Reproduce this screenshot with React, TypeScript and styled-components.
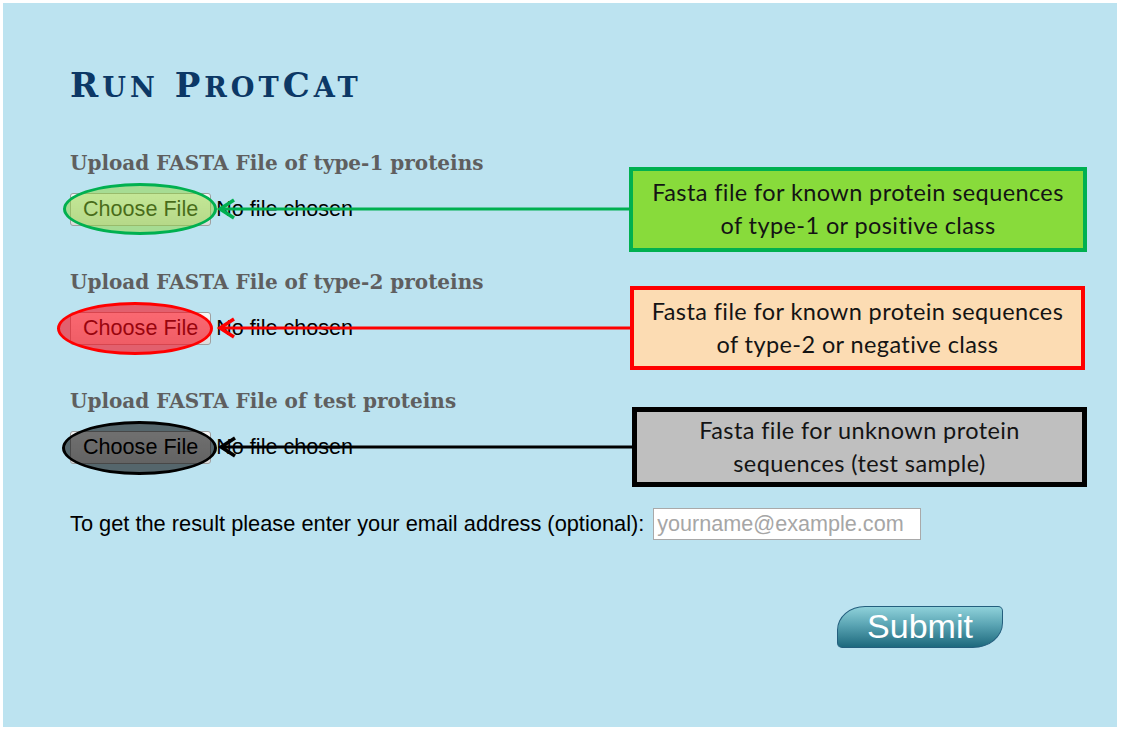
import styled, { createGlobalStyle } from "styled-components";

const GlobalStyle = createGlobalStyle`
  html, body {
    margin: 0;
    padding: 0;
    background: #ffffff;
  }
`;

const Panel = styled.main`
  box-sizing: border-box;
  margin: 3px;
  width: 1114px;
  height: 724px;
  background: #bce3f0;
  padding: 62px 30px 0 67px;
  display: flex;
  flex-direction: column;
`;

const Title = styled.h1`
  margin: 0 0 44px;
  font-family: "DejaVu Serif", serif;
  font-size: 34px;
  line-height: 40px;
  font-weight: bold;
  letter-spacing: 4px;
  color: #0c3866;
`;

const Small = styled.span`
  font-size: 0.8em;
  text-transform: uppercase;
`;

const Section = styled.section`
  display: flex;
  flex-direction: column;
  gap: 17px;
  margin-bottom: 44px;
`;

const Heading = styled.h2`
  margin: 0;
  font-family: "DejaVu Serif", serif;
  font-size: 20px;
  line-height: 24px;
  font-weight: bold;
  color: #5f5f5f;
`;

const FieldRow = styled.div`
  display: flex;
  align-items: center;
  height: 34px;
`;

const FileField = styled.label`
  position: relative;
  display: flex;
  align-items: center;
  gap: 5px;
  font-family: "Liberation Sans", Arial, sans-serif;
  font-size: 21.6px;
  color: #000;
`;

const ChooseButton = styled.span`
  box-sizing: border-box;
  height: 33px;
  padding: 0 12px;
  display: flex;
  align-items: center;
  border: 1px solid #a0a0a0;
  border-radius: 3px;
  background: linear-gradient(#f8f8f8, #dcdcdc);
`;

const Highlight = styled.span<{
  $fill: string;
  $stroke: string;
  $left: number;
  $top: number;
  $w: number;
  $h: number;
}>`
  position: absolute;
  box-sizing: border-box;
  left: ${(p) => p.$left}px;
  top: ${(p) => p.$top}px;
  width: ${(p) => p.$w}px;
  height: ${(p) => p.$h}px;
  border-radius: 50%;
  border: 3px solid ${(p) => p.$stroke};
  background: ${(p) => p.$fill};
  pointer-events: none;
`;

const Callout = styled.div<{
  $bg: string;
  $border: string;
  $bw: number;
  $width: number;
  $height: number;
  $right: number;
}>`
  position: relative;
  box-sizing: border-box;
  margin-left: auto;
  margin-right: ${(p) => p.$right}px;
  width: ${(p) => p.$width}px;
  height: ${(p) => p.$height}px;
  flex-shrink: 0;
  display: flex;
  align-items: center;
  justify-content: center;
  text-align: center;
  background: ${(p) => p.$bg};
  border: ${(p) => p.$bw}px solid ${(p) => p.$border};
  font-family: Lato, "Open Sans", sans-serif;
  font-size: 23.5px;
  letter-spacing: 0.4px;
  line-height: 33px;
  color: #141414;
`;

const Arrow = styled.svg`
  position: absolute;
  right: 100%;
  top: 50%;
  height: 22px;
  margin-top: -11px;
  overflow: visible;
`;

const EmailRow = styled.div`
  display: flex;
  align-items: center;
  gap: 9px;
  font-family: "Liberation Sans", Arial, sans-serif;
  font-size: 21.8px;
  color: #000;
`;

const EmailInput = styled.input`
  box-sizing: border-box;
  width: 268px;
  height: 32px;
  border: 1px solid #a9a9a9;
  padding: 0 3px;
  background: #fff;
  font-family: "Liberation Sans", Arial, sans-serif;
  font-size: 21.6px;
  outline: none;

  &::placeholder {
    color: #a6a6a6;
  }
`;

const SubmitRow = styled.div`
  display: flex;
  justify-content: flex-end;
  margin-top: 66px;
  padding-right: 84px;
`;

const SubmitButton = styled.button`
  box-sizing: border-box;
  width: 166px;
  height: 42px;
  padding: 0 0 2px;
  border: 1px solid #245f7e;
  border-radius: 28px 5px 30px 5px / 24px 5px 25px 5px;
  background: linear-gradient(#8fd1da, #5aa4b3 45%, #1d697d);
  color: #fff;
  font-family: "Liberation Sans", Arial, sans-serif;
  font-size: 34px;
  cursor: pointer;
`;

type Upload = {
  heading: string;
  color: string;
  fill: string;
  ring: { left: number; top: number; w: number; h: number };
  box: { bg: string; bw: number; width: number; height: number; right: number };
  lines: [string, string];
};

const uploads: Upload[] = [
  {
    heading: "Upload FASTA File of type-1 proteins",
    color: "#00b050",
    fill: "rgba(144, 213, 54, 0.5)",
    ring: { left: -7, top: -10, w: 154, h: 52 },
    box: { bg: "#88db3b", bw: 4, width: 458, height: 85, right: 0 },
    lines: ["Fasta file for known protein sequences", "of type-1 or positive class"],
  },
  {
    heading: "Upload FASTA File of type-2 proteins",
    color: "#ff0000",
    fill: "rgba(252, 8, 23, 0.6)",
    ring: { left: -13, top: -10, w: 156, h: 53 },
    box: { bg: "#fcdcb3", bw: 4, width: 455, height: 84, right: 2 },
    lines: ["Fasta file for known protein sequences", "of type-2 or negative class"],
  },
  {
    heading: "Upload FASTA File of test proteins",
    color: "#000000",
    fill: "rgba(0, 0, 0, 0.55)",
    ring: { left: -8, top: -10, w: 155, h: 54 },
    box: { bg: "#bfbfbf", bw: 5, width: 455, height: 80, right: 0 },
    lines: ["Fasta file for unknown protein", "sequences (test sample)"],
  },
];

function PointerArrow({ color, length }: { color: string; length: number }) {
  return (
    <Arrow width={length} viewBox={`0 0 ${length} 22`}>
      <line x1={4} y1={11} x2={length} y2={11} stroke={color} strokeWidth={3} />
      <polyline
        points="17,2 3,11 17,20"
        fill="none"
        stroke={color}
        strokeWidth={3.5}
        strokeLinejoin="miter"
      />
    </Arrow>
  );
}

export default function App() {
  return (
    <>
      <GlobalStyle />
      <Panel>
        <Title>
          R<Small>un</Small> P<Small>rot</Small>C<Small>at</Small>
        </Title>
        {uploads.map((u) => (
          <Section key={u.heading}>
            <Heading>{u.heading}</Heading>
            <FieldRow>
              <FileField>
                <ChooseButton>Choose File</ChooseButton>
                <span>No file chosen</span>
                <Highlight
                  $fill={u.fill}
                  $stroke={u.color}
                  $left={u.ring.left}
                  $top={u.ring.top}
                  $w={u.ring.w}
                  $h={u.ring.h}
                />
              </FileField>
              <Callout
                $bg={u.box.bg}
                $border={u.color}
                $bw={u.box.bw}
                $width={u.box.width}
                $height={u.box.height}
                $right={u.box.right}
              >
                <PointerArrow
                  color={u.color}
                  length={1087 - u.box.right - u.box.width - 213}
                />
                <div>
                  {u.lines[0]}
                  <br />
                  {u.lines[1]}
                </div>
              </Callout>
            </FieldRow>
          </Section>
        ))}
        <EmailRow>
          <span>To get the result please enter your email address (optional):</span>
          <EmailInput type="email" placeholder="yourname@example.com" />
        </EmailRow>
        <SubmitRow>
          <SubmitButton type="submit">Submit</SubmitButton>
        </SubmitRow>
      </Panel>
    </>
  );
}
